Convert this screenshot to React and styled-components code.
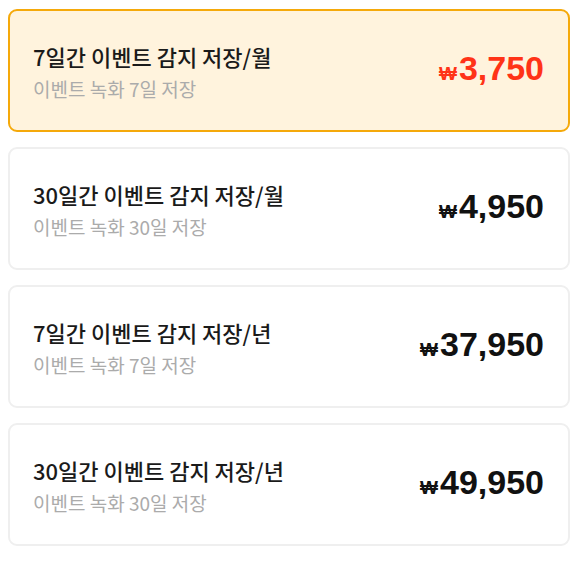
import React from 'react';
import styled, { createGlobalStyle } from 'styled-components';

const GlobalStyle = createGlobalStyle`
  body {
    margin: 0;
    background: #ffffff;
    font-family: "Noto Sans CJK KR", "Noto Sans", sans-serif;
  }
`;

const plans = [
  { id: 1, title: '7일간 이벤트 감지 저장/월', desc: '이벤트 녹화 7일 저장', price: '3,750', selected: true },
  { id: 2, title: '30일간 이벤트 감지 저장/월', desc: '이벤트 녹화 30일 저장', price: '4,950' },
  { id: 3, title: '7일간 이벤트 감지 저장/년', desc: '이벤트 녹화 7일 저장', price: '37,950' },
  { id: 4, title: '30일간 이벤트 감지 저장/년', desc: '이벤트 녹화 30일 저장', price: '49,950' },
];

const App = () => {
  return (
    <>
      <GlobalStyle />
      <PlanList>
        {plans.map(plan => (
          <PlanCard key={plan.id} selected={plan.selected}>
            <Info>
              <Title>{plan.title}</Title>
              <Desc>{plan.desc}</Desc>
            </Info>
            <Price selected={plan.selected}>
              <Won>₩</Won>
              {plan.price}
            </Price>
          </PlanCard>
        ))}
      </PlanList>
    </>
  );
};

export default App;

const PlanList = styled.div`
  display: flex;
  flex-direction: column;
  gap: 15px;
  padding: 9px 12px 0 8px;
`;

const PlanCard = styled.div`
  display: flex;
  align-items: center;
  justify-content: space-between;
  height: 123px;
  box-sizing: border-box;
  padding: 0 24px 0 23px;
  border-radius: 9px;
  border: 2px solid ${p => (p.selected ? '#f5a90a' : '#efefef')};
  background: ${p => (p.selected ? '#fff3dd' : '#ffffff')};
`;

const Info = styled.div`
  display: flex;
  flex-direction: column;
  gap: 7px;
  padding-top: 1px;
`;

const Title = styled.div`
  font-size: 22px;
  font-weight: 500;
  color: #1a1a1a;
  line-height: 28px;
`;

const Desc = styled.div`
  font-size: 19px;
  color: #ababab;
  line-height: 24px;
`;

const Price = styled.div`
  display: flex;
  align-items: baseline;
  font-family: "Liberation Sans", Arial, sans-serif;
  font-weight: 700;
  font-size: 34px;
  color: ${p => (p.selected ? '#ff3317' : '#111111')};
  padding-bottom: 4px;
`;

const Won = styled.span`
  font-size: 19px;
  margin-right: 2px;
`;
